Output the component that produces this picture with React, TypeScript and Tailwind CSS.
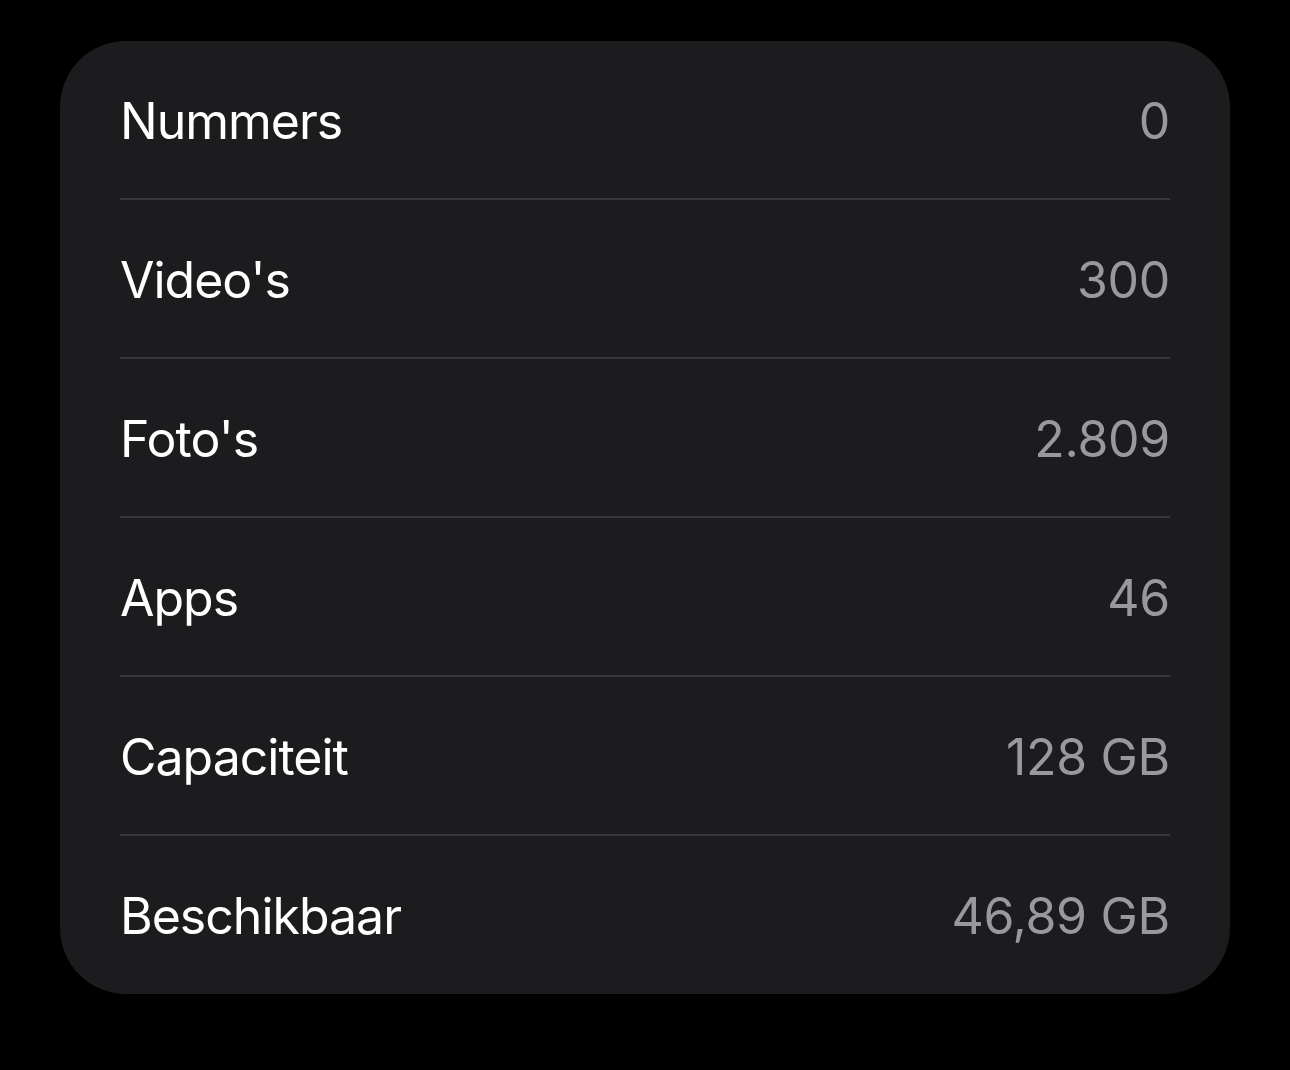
const rows: { label: string; value: string }[] = [
  { label: "Nummers", value: "0" },
  { label: "Video's", value: "300" },
  { label: "Foto's", value: "2.809" },
  { label: "Apps", value: "46" },
  { label: "Capaciteit", value: "128 GB" },
  { label: "Beschikbaar", value: "46,89 GB" },
];

export default function App() {
  return (
    <div className="w-[1290px] h-[1070px] bg-black pt-[41px] pl-[60px] font-['Inter','Liberation_Sans',sans-serif]">
      <div className="w-[1170px] h-[953px] rounded-[66px] bg-[#1c1c1e] px-[60px] flex flex-col">
        {rows.map((row, i) => (
          <div key={row.label} className="flex flex-col">
            {i > 0 && <div className="h-[2px] bg-[#38383a]" />}
            <div className="h-[157px] flex items-center justify-between pt-[3px] text-[50px]">
              <span className="text-white tracking-[-1px]">{row.label}</span>
              <span className="text-[#98989e] tracking-[-0.3px]">{row.value}</span>
            </div>
          </div>
        ))}
      </div>
    </div>
  );
}
